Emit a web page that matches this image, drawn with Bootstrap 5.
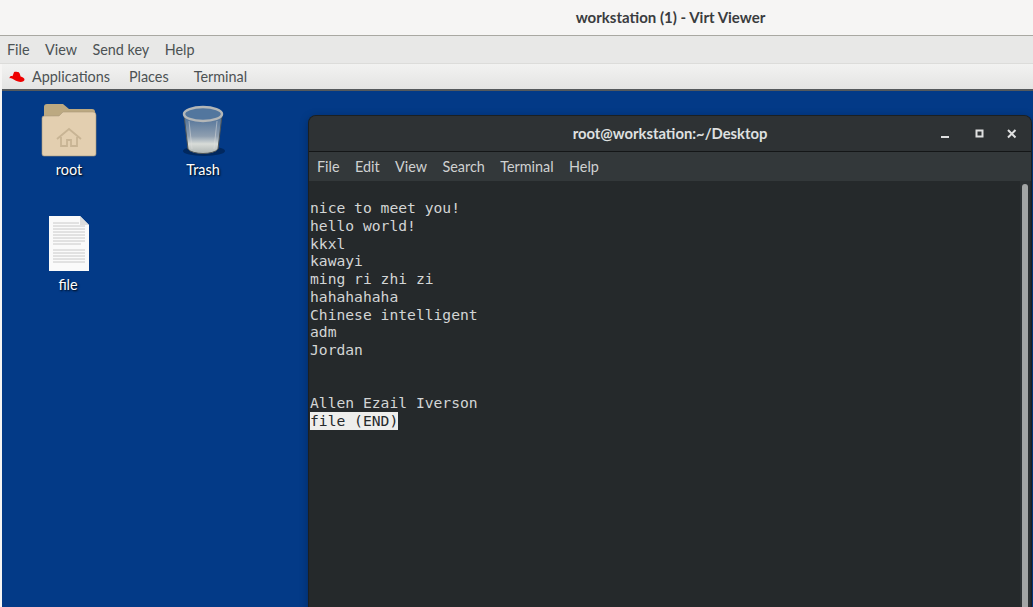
<!DOCTYPE html>
<html lang="en"><head><meta charset="utf-8"><title>workstation (1) - Virt Viewer</title>
<link href="https://cdn.jsdelivr.net/npm/bootstrap@5.3.0/dist/css/bootstrap.min.css" rel="stylesheet">
<style>
html,body{height:607px;overflow:hidden;background:#f6f5f4}
body{font-family:Lato,"Liberation Sans",sans-serif;font-size:14.4px;color:#3d4345}
.vv-title{height:35px;background:#f6f5f4;font-weight:700;font-size:15px;color:#3a3c3e;padding-left:308px}
.vv-menu{height:29px;background:#e8e8e7;border-top:1px solid #a9a8a2;border-bottom:1px solid #dcdcda;padding-left:7px;gap:15.400px;color:#4c5254}
.gn-panel{height:27px;margin-left:2px;background:linear-gradient(#f2f2f1,#e4e4e3);border-bottom:2px solid #55595c;padding-left:7px;color:#4c5254}
.gn-panel .apps{margin-left:7px}
.gn-panel .places{margin-left:19px}
.gn-panel .term{margin-left:25px}
.desk{position:relative;height:516px;margin-left:2px;background:#033a87;overflow:hidden}
.dicon{position:absolute;width:100px;text-align:center;color:#fff;text-shadow:1px 1px 2px #000;font-size:14.4px}
.dicon svg{display:block;margin:0 auto}
.dlabel{line-height:20px}
.twin{position:absolute;left:307px;top:25px;width:722px;height:500px;background:#2d3133;border-radius:7px 7px 0 0;box-shadow:0 0 0 1px #1c2021,0 2px 10px rgba(0,0,0,.35)}
.ttitle{height:36px;background:#2e3234;border-bottom:1px solid #141617;color:#dfe0e0;font-size:14.8px;font-weight:700;position:relative;border-radius:7px 7px 0 0}
.wbtn{position:absolute;display:block}
.tmenu{height:29px;background:#33383a;color:#cfd1d1;gap:15.400px;padding-left:8px}
.tbody{position:relative;height:434px;background:#25292b;padding:18px 0 0 1px;font-family:"DejaVu Sans Mono",monospace;font-size:14.67px;line-height:17.75px;color:#d3d5d5;white-space:pre}
.sel{background:#eeeeec;color:#25292b;display:inline-block}
.strack{position:absolute;right:1px;top:0;bottom:0;width:10px;background:#2e3234}
.sbar{position:absolute;right:3px;top:3px;bottom:2px;width:6px;background:#a4a6a6;border-radius:3px}
</style></head>
<body>
<div class="vv-title d-flex align-items-center justify-content-center">workstation (1) - Virt Viewer</div>
<div class="vv-menu d-flex align-items-center"><span>File</span><span>View</span><span>Send key</span><span>Help</span></div>
<div class="gn-panel d-flex align-items-center">
<svg width="16" height="12" viewBox="0 0 16 12"><path fill="#e00" d="M5 1.200C6 .4 7.500 1 8.500 1c1.200 0 2 .6 2.500 2.500l.6 2c2 .7 3.900 1.600 3.900 3 0 1.500-1.700 2.500-4 2.500-3.500 0-6-2-8-3.200C2.300 7.300 1.800 7.100 1.500 7 1 7.800.6 7.300.6 6.700.6 5.500 2 4.800 3.500 5.200z"/></svg>
<span class="apps">Applications</span><span class="places">Places</span><span class="term">Terminal</span></div>
<div class="desk">
<div class="dicon" style="left:17px;top:12px">
<svg width="56" height="56" viewBox="0 0 56 56"><path fill="#bca981" d="M3 4a3 3 0 0 1 3-3h16l6 5h23a3 3 0 0 1 3 3v15H3z"/><path fill="#e3cfb0" stroke="#a8977a" stroke-width=".6" d="M1 15a2 2 0 0 1 2-2l15-.1 4-3.900H52a3 3 0 0 1 3 3v39a2 2 0 0 1-2 2H3a2 2 0 0 1-2-2z"/><path fill="none" stroke="#c8b494" stroke-width="1.800" d="M16 36l12-10 12 10M20 34v9h6v-6h4v6h6v-9"/></svg>
<div class="dlabel" style="margin-top:1px">root</div></div>
<div class="dicon" style="left:151px;top:14px">
<svg width="48" height="52" viewBox="0 0 48 52"><defs><linearGradient id="g1" x1="0" x2="0" y1="0" y2="1"><stop offset="0" stop-color="#4a6d96"/><stop offset=".55" stop-color="#8f9fb0"/><stop offset=".75" stop-color="#d8dcd8"/><stop offset="1" stop-color="#aeb4b2"/></linearGradient></defs><ellipse cx="25" cy="46" rx="21" ry="5" fill="#01285f"/><path fill="url(#g1)" stroke="#4e5558" d="M5 10l4 34c4 6 26 6 30 0l4-34z"/><ellipse cx="24" cy="9" rx="19" ry="7" fill="#52769e" stroke="#b4b7b8" stroke-width="2.500"/><path d="M10 16l3 28M38 16l-3 28" stroke="#ddd" opacity=".5" fill="none"/></svg>
<div class="dlabel" style="margin-top:3px">Trash</div></div>
<div class="dicon" style="left:16px;top:125px">
<svg width="40" height="56" viewBox="0 0 40 56" style="transform:translateX(1px)"><path fill="#fafafa" d="M0 0h31l9 9v46H0z"/><path fill="#ddd" d="M31 0l9 9h-9z"/><path stroke="#c4c4c4" stroke-width=".9" d="M4 7h26M4 10h32M4 13h32M4 16h32M4 19h32M4 22h32M4 25h32M4 28h28M4 34h32M4 37h32M4 40h32M4 43h32M4 46h32"/></svg>
<div class="dlabel" style="margin-top:3px">file</div></div>
<div class="twin">
<div class="ttitle d-flex align-items-center justify-content-center">root@workstation:~/Desktop
<svg class="wbtn" style="left:630px;top:11px" width="12" height="12" viewBox="0 0 12 12"><path d="M2 10h8" stroke="#dfe0e0" stroke-width="2"/></svg>
<svg class="wbtn" style="left:665px;top:12px" width="12" height="12" viewBox="0 0 12 12"><rect x="2.500" y="2.500" width="6" height="6" fill="none" stroke="#dfe0e0" stroke-width="2"/></svg>
<svg class="wbtn" style="left:697px;top:12px" width="12" height="12" viewBox="0 0 12 12"><path d="M2 2l7.500 7.500M9.500 2L2 9.500" stroke="#dfe0e0" stroke-width="2"/></svg>
</div>
<div class="tmenu d-flex align-items-center"><span>File</span><span>Edit</span><span>View</span><span>Search</span><span>Terminal</span><span>Help</span></div>
<div class="tbody"><div class="strack"></div><div class="sbar"></div>nice to meet you!
hello world!
kkxl
kawayi
ming ri zhi zi
hahahahaha
Chinese intelligent
adm
Jordan


Allen Ezail Iverson
<span class="sel">file (END)</span></div>
</div>
</div>
</body></html>
